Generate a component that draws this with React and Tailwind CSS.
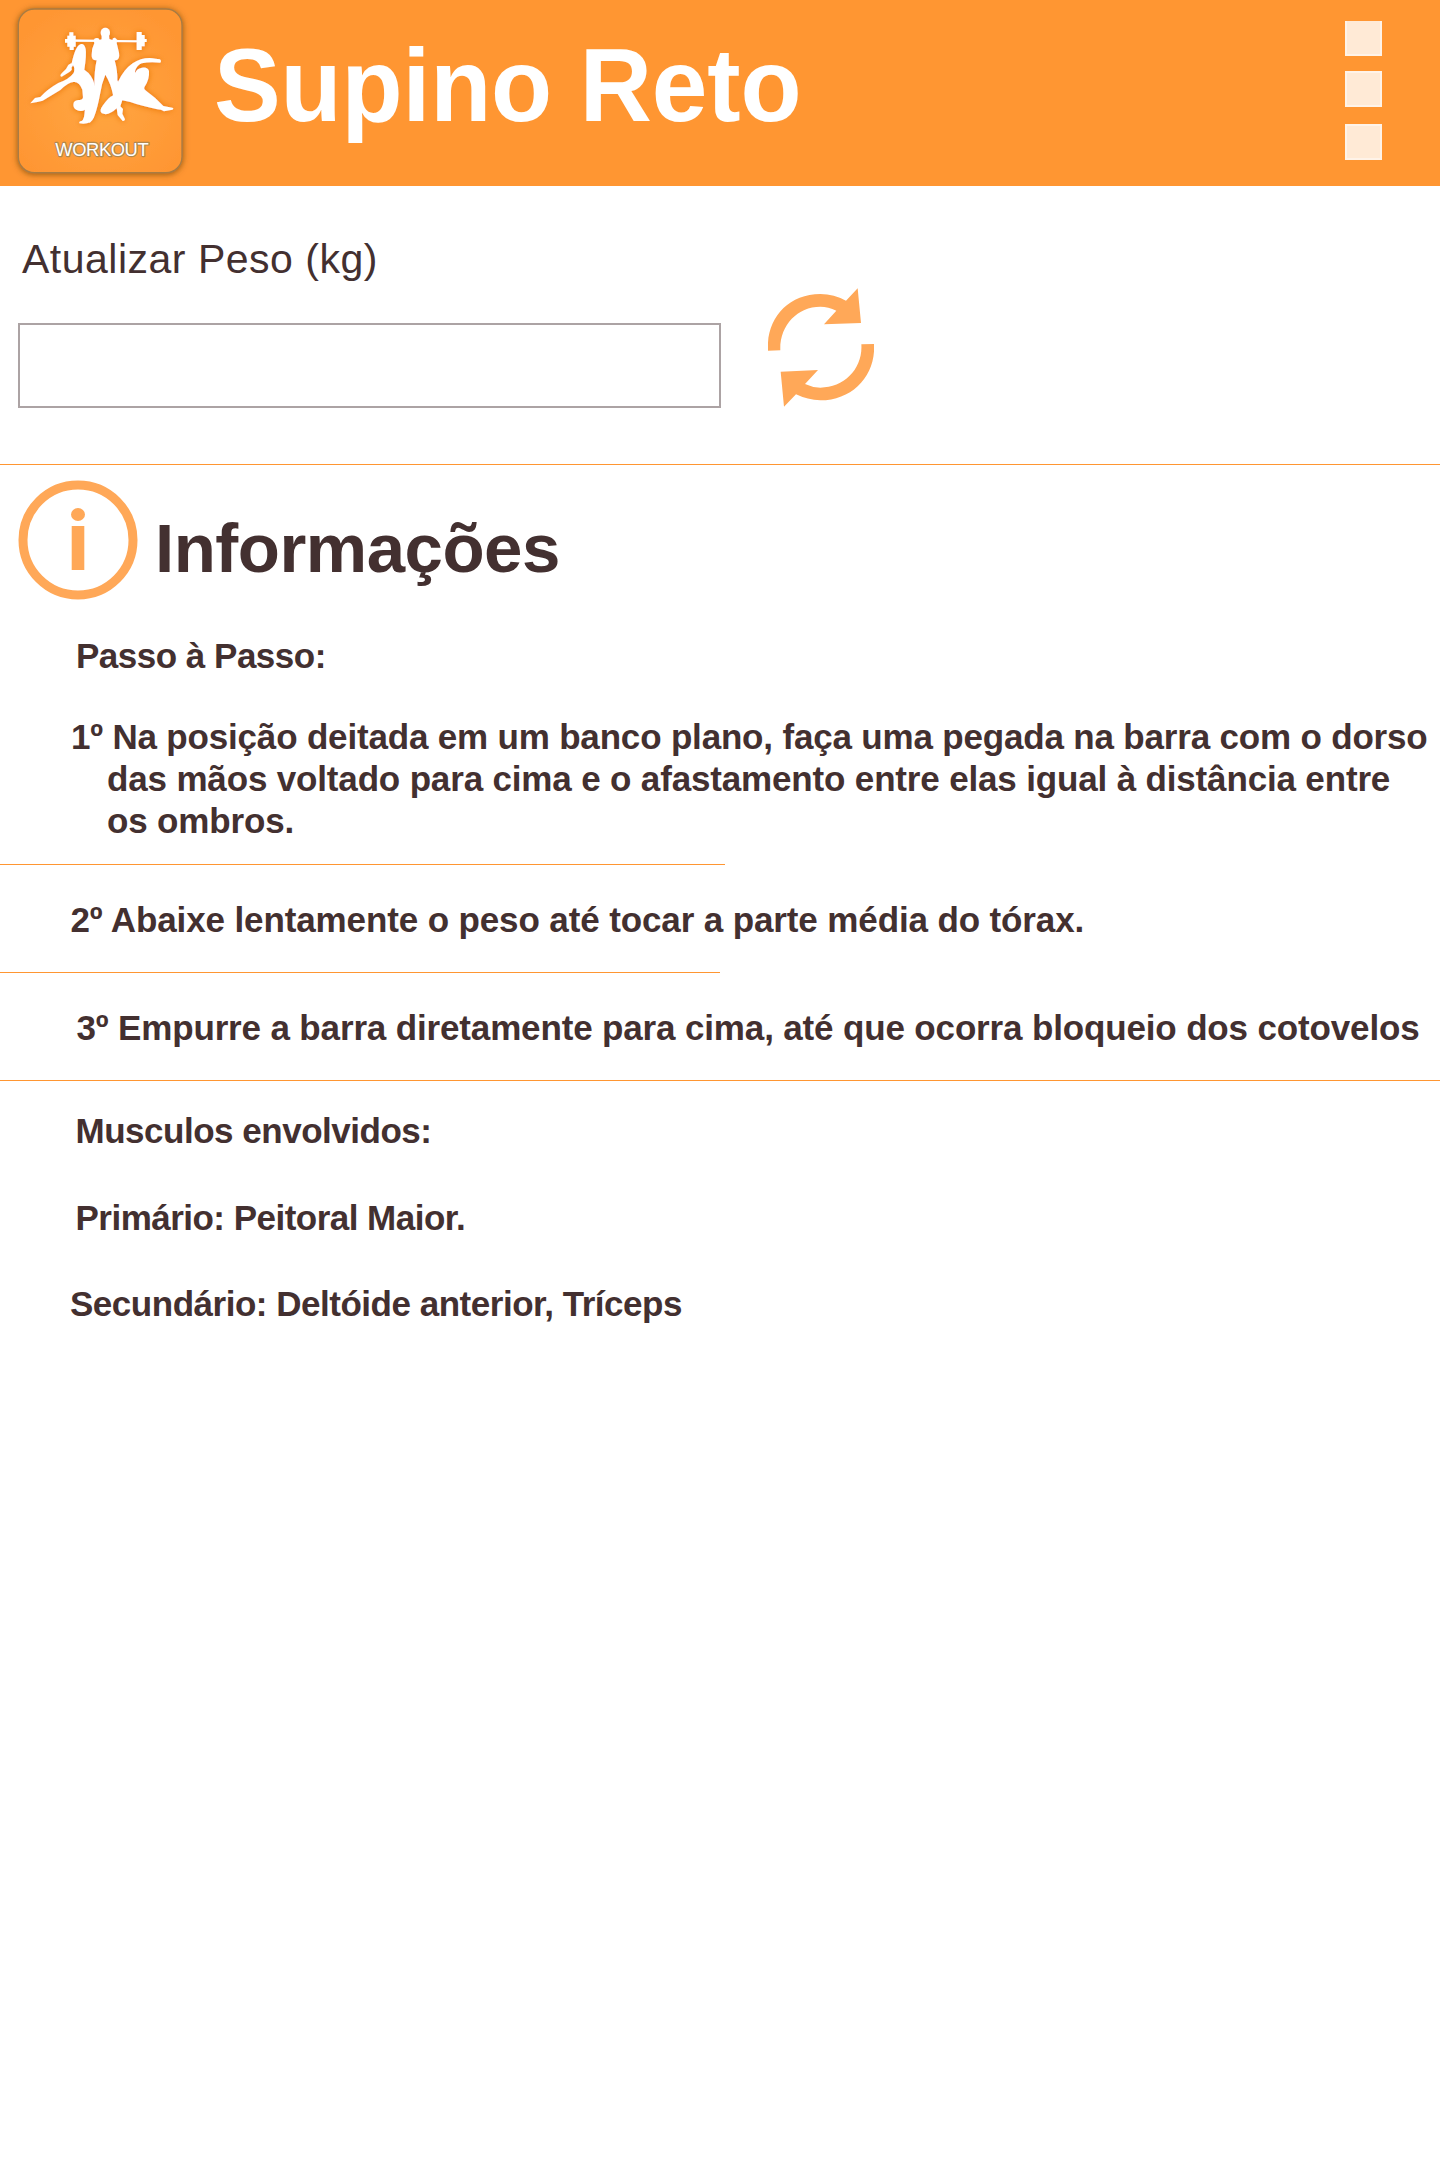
function Logo() {
  return (
    <svg viewBox="0 0 600 558" className="h-[186px] w-[200px] shrink-0" aria-label="Workout">
      <defs>
        <radialGradient id="tile" cx="50%" cy="55%" r="60%">
          <stop offset="0" stopColor="#ffa741" />
          <stop offset="1" stopColor="#ff9633" />
        </radialGradient>
        <filter id="tileGlow" x="-20%" y="-20%" width="140%" height="140%">
          <feDropShadow dx="0" dy="3" stdDeviation="9" floodColor="#6b4310" floodOpacity="0.75" />
        </filter>
        <filter id="figureGlow" x="-20%" y="-20%" width="140%" height="140%">
          <feDropShadow dx="0" dy="1" stdDeviation="9" floodColor="#e87400" floodOpacity="1" />
        </filter>
      </defs>
      <rect x="55" y="27" width="491" height="491" rx="48" fill="url(#tile)" stroke="#a87b42" strokeWidth="4" filter="url(#tileGlow)" />
      <g fill="#fff" filter="url(#figureGlow)">
        <path d="M225 118.500 L412 120.500 V127 L225 125Z" />
        <path d="M208 97H220V107H227V140H221V150H209V140H202V128H195V117H202V107H208Z" />
        <path d="M410 96H425V105H434V117H440V126H434V139H425V150H410Z" />
        <ellipse cx="316" cy="98" rx="14" ry="15" />
        <path d="M305 106 H327 L328 117 L338 121 Q336 114 345 113 L352 120 L350 129 L357 158 Q360 178 348 181 L344 181 Q353 213 352 241 L357 250 L352 292 L340 289 Q333 251 316 224 Q305 251 301 278 Q293 322 283 349 Q278 363 269 368 L254 350 L255 315 L283 256 Q283 211 290 181 Q274 182 275 165 Q275 145 283 130 L281 120 Q285 112 295 115 L299 121 L305 118Z" />
        <path d="M91 310 L105 294 L121 291 Q143 267 175 249 Q207 238 221 219 Q226 204 219 196 L214 204 Q219 209 208 216 L185 230 Q177 228 186 219 Q200 208 205 195 Q211 190 215 190 Q226 137 243 132 Q253 130 257 147 Q260 164 253 209 Q276 224 283 252 L288 300 L281 353 Q273 361 270 367 Q257 373 238 370 Q236 364 245 363 Q254 356 255 329 Q244 337 230 330 Q217 323 221 308 Q226 299 239 300 Q248 300 249 292 L247 269 Q238 245 222 246 Q207 245 181 270 Q150 289 128 302 L112 306Z" />
        <path d="M481 188 Q449 184 425 190 Q410 196 405 214 L405 219 Q410 206 426 203 Q443 200 447 213 Q449 239 433 262 Q430 267 438 272 Q468 293 490 318 L517 323 Q523 325 517 329 L492 334 Q484 328 472 328 Q425 318 391 306 L367 301 L361 319 L369 327 L367 341 L375 358 Q374 364 368 363 L353 345 L350 325 Q325 349 306 340 Q296 333 309 316 Q326 291 338 287 Q344 265 355 244 Q372 208 398 190 Q430 169 467 176 L480 178 Q486 183 481 188Z" />
      </g>
      <text x="306" y="469" textAnchor="middle" textLength="280" fontFamily="Liberation Sans, Arial, sans-serif" fontSize="55" fill="#fff" stroke="#b08850" strokeWidth="7" strokeLinejoin="round" paintOrder="stroke">WORKOUT</text>
    </svg>
  );
}

function RefreshIcon() {
  return (
    <svg viewBox="204 54 318 357" className="mt-[-35px] ml-[47px] h-[119px] w-[106px]" fill="#ffa858" aria-label="Atualizar">
      <path d="M204 242 C198 148 262 72 361 72 Q403 73 438 92 L473 55 L483 159 L372 163 L409 122 Q385 110 361 110 C291 110 238 168 241 241Z" />
      <path d="M522 222 C528 315 459 391 361 391 Q323 390 288 373 L252 410 L242 305 L354 300 L315 342 Q338 353 361 353 C434 353 489 295 484 223Z" />
    </svg>
  );
}

function InfoIcon() {
  return (
    <svg viewBox="0 0 120 120" className="mt-[15px] ml-[18px] h-[120px] w-[120px] shrink-0" fill="#ffa858">
      <circle cx="60" cy="60" r="55" fill="none" stroke="#ffa858" strokeWidth="9" />
      <ellipse cx="60" cy="34.5" rx="7" ry="6.5" />
      <rect x="53.7" y="46" width="12.6" height="44" />
    </svg>
  );
}

export default function App() {
  return (
    <div className="min-h-[2160px] w-[1440px] overflow-hidden bg-white font-['Liberation_Sans',Arial,sans-serif] text-[#433030]">
      <header className="flex h-[186px] bg-[#ff9632]">
        <Logo />
        <h1 className="mt-[36px] ml-[14px] h-[100px] origin-[50%_85%] scale-y-[1.035] text-[100px] leading-[100px] font-bold tracking-[-0.13px] whitespace-nowrap text-white">Supino Reto</h1>
        <div className="mt-[21px] mr-[58px] ml-auto flex w-[37px] flex-col">
          <span className="h-[35px] border-x-2 border-b-2 border-[#fff3e8] bg-[#ffead6]" />
          <span className="mt-[15px] h-[36px] border-2 border-[#fff3e8] bg-[#ffead6]" />
          <span className="mt-[17px] h-[36px] border-2 border-[#fff3e8] bg-[#ffead6]" />
        </div>
      </header>

      <section className="h-[278px] pt-[49px]">
        <label htmlFor="peso" className="ml-[22px] block h-12 text-[41px] leading-[48px] tracking-[0.5px]">Atualizar Peso (kg)</label>
        <div className="mt-10 flex">
          <input id="peso" className="ml-[18px] h-[85px] w-[703px] border-2 border-[#aca3a4] bg-white" />
          <RefreshIcon />
        </div>
      </section>

      <section className="h-[171px] border-t border-[#ff9632]">
        <div className="flex">
          <InfoIcon />
          <h2 className="mt-[44px] ml-[17px] text-[69px] leading-[80px] font-bold tracking-[-0.5px]">Informações</h2>
        </div>
      </section>

      <section className="text-[35px] leading-[42px] font-bold whitespace-nowrap">
        <h3 className="ml-[76px] tracking-[-0.5px]">Passo à Passo:</h3>
        <div className="mt-[39px] tracking-[-0.16px]">
          <p className="ml-[71px] tracking-[-0.18px]">1º Na posição deitada em um banco plano, faça uma pegada na barra com o dorso</p>
          <p className="ml-[107px]">das mãos voltado para cima e o afastamento entre elas igual à distância entre</p>
          <p className="ml-[107px]">os ombros.</p>
        </div>
        <hr className="mt-[22px] w-[725px] border-[#ff9632]" />
        <p className="mt-[34px] ml-[70.5px] tracking-[-0.12px]">2º Abaixe lentamente o peso até tocar a parte média do tórax.</p>
        <hr className="mt-[31px] w-[720px] border-[#ff9632]" />
        <p className="mt-[34px] ml-[76.5px] tracking-[-0.15px]">3º Empurre a barra diretamente para cima, até que ocorra bloqueio dos cotovelos</p>
        <hr className="mt-[31px] border-[#ff9632]" />
        <div className="mt-[29px] flex flex-col gap-[45px] tracking-[-0.48px]">
          <p className="ml-[75.5px]">Musculos envolvidos:</p>
          <p className="ml-[75.5px] tracking-[-0.52px]">Primário: Peitoral Maior.</p>
          <p className="mt-[-1px] ml-[70px]">Secundário: Deltóide anterior, Tríceps</p>
        </div>
      </section>
    </div>
  );
}
